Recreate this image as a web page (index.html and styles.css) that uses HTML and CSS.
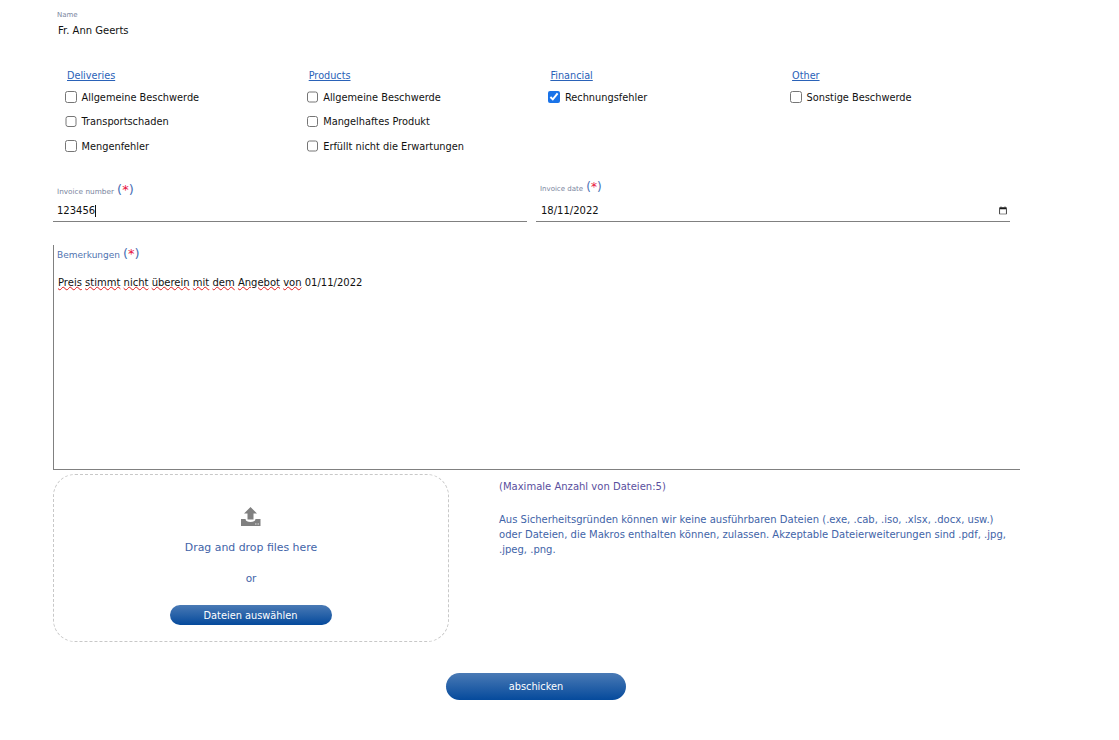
FILE: index.html
```html
<!DOCTYPE html>
<html lang="de">
<head>
<meta charset="utf-8">
<title>Beschwerde</title>
<link rel="stylesheet" href="styles.css">
</head>
<body>
<form class="page">
  <div class="name-block">
    <div class="tiny-label">Name</div>
    <div class="name-value">Fr. Ann Geerts</div>
  </div>

  <div class="categories">
    <div class="category">
      <a class="cat-title">Deliveries</a>
      <label class="check"><input type="checkbox"><span>Allgemeine Beschwerde</span></label>
      <label class="check"><input type="checkbox"><span>Transportschaden</span></label>
      <label class="check"><input type="checkbox"><span>Mengenfehler</span></label>
    </div>
    <div class="category">
      <a class="cat-title">Products</a>
      <label class="check"><input type="checkbox"><span>Allgemeine Beschwerde</span></label>
      <label class="check"><input type="checkbox"><span>Mangelhaftes Produkt</span></label>
      <label class="check"><input type="checkbox"><span>Erfüllt nicht die Erwartungen</span></label>
    </div>
    <div class="category">
      <a class="cat-title">Financial</a>
      <label class="check"><input type="checkbox" checked><span>Rechnungsfehler</span></label>
    </div>
    <div class="category">
      <a class="cat-title">Other</a>
      <label class="check"><input type="checkbox"><span>Sonstige Beschwerde</span></label>
    </div>
  </div>

  <div class="invoice-row">
    <div class="field">
      <div class="field-label"><span class="tiny-label label-number">Invoice number</span> <span class="req">(<b>*</b>)</span></div>
      <div class="field-value"><span class="caret-text">123456</span></div>
    </div>
    <div class="field field-date">
      <div class="field-label"><span class="tiny-label">Invoice date</span> <span class="req req-date">(<b>*</b>)</span></div>
      <div class="field-value date-value">
        <span>18/11/2022</span>
        <svg class="cal" width="8" height="9" viewBox="0 0 10 11"><path d="M1 1.500h8a.7.7 0 0 1 .7.7v7.300a.7.7 0 0 1-.7.7H1a.7.7 0 0 1-.7-.7V2.200a.7.7 0 0 1 .7-.7zM1.300 4v5.500h7.400V4z" fill="#1a1a1a" fill-rule="evenodd"/><path d="M2 .5h1v1H2zM7 .5h1v1H7z" fill="#1a1a1a"/></svg>
      </div>
    </div>
  </div>

  <div class="remarks">
    <div class="remarks-label">Bemerkungen <span class="req">(<b>*</b>)</span></div>
    <div class="remarks-text"><i>Preis</i> <i>stimmt</i> <i>nicht</i> <i>überein</i> <i>mit</i> <i>dem</i> <i>Angebot</i> <i>von</i> 01/11/2022</div>
  </div>

  <div class="upload-row">
    <div class="dropzone">
      <svg class="upload-icon" width="20" height="20" viewBox="0 0 20 20"><path d="M9.500 0 16 6.500h-3.500v6h-6v-6H3z" fill="#808080"/><path d="M0 12h4.500c.3 2.200 2 3 5 3s4.700-.8 5-3H19.500v7H0z" fill="#808080"/><path d="M14 16.500h1.500v1H14zM16.500 16.500H18v1h-1.500z" fill="#ddd"/></svg>
      <div class="drop-text">Drag and drop files here</div>
      <div class="drop-or">or</div>
      <button type="button" class="btn btn-small">Dateien auswählen</button>
    </div>
    <div class="upload-info">
      <p class="max-files">(Maximale Anzahl von Dateien:5)</p>
      <p>Aus Sicherheitsgründen können wir keine ausführbaren Dateien (.exe, .cab, .iso, .xlsx, .docx, usw.) oder Dateien, die Makros enthalten können, zulassen. Akzeptable Dateierweiterungen sind .pdf, .jpg, .jpeg, .png.</p>
    </div>
  </div>

  <div class="submit-row">
    <button type="button" class="btn btn-submit">abschicken</button>
  </div>
</form>
</body>
</html>
```
FILE: styles.css
```css
* { box-sizing: border-box; }
html, body { margin: 0; padding: 0; background: #fff; }
body {
  font-family: "DejaVu Sans", Verdana, sans-serif;
  font-size: 10px;
  color: #111;
  height: 740px;
  overflow: hidden;
}
.page { width: 1020px; padding: 11px 0 0 53px; }

.tiny-label { font-size: 7px; color: #7a86a0; line-height: 9px; }
.label-number { font-size: 7.300px; }
.name-block { padding-left: 4px; height: 42px; }
.name-value { margin-top: 5px; margin-left: 1px; line-height: 12px; }

.categories { display: grid; grid-template-columns: repeat(4, 241.700px); padding-left: 12px; height: 127px; padding-top: 16px; }
.category { display: flex; flex-direction: column; align-items: flex-start; }
.cat-title { color: #2a62b8; font-size: 9.700px; text-decoration: underline; margin-left: 2px; line-height: 14px; height: 14px; margin-bottom: 7px; }
.check { display: flex; align-items: center; height: 14px; margin-bottom: 10.500px; color: #111; font-size: 9.800px; }
.check input { width: 11.500px; height: 11.500px; margin: 0 5px 0 0; accent-color: #1a73e8; }

.invoice-row { display: flex; gap: 9px; width: 957px; }
.field { width: 474px; }
.field-label { height: 18px; line-height: 14px; padding-left: 4px; padding-top: 3px; }
.field-date .field-label { padding-top: 0; }
.req { color: #4a6fb5; font-size: 13px; }
.req-date { font-size: 12px; }
.req b { color: #e8103c; font-weight: 400; }
.field-value { height: 24px; border-bottom: 1px solid #808080; padding: 6px 0 0 4px; line-height: 13px; color: #111; }
.caret-text { border-right: 1px solid #111; display: inline-block; line-height: 12px; }
.date-value { display: flex; justify-content: space-between; padding-left: 5px; padding-right: 3px; }
.cal { margin-top: 2px; }

.remarks {
  margin-top: 23px;
  height: 225px;
  border-left: 1px solid #808080;
  border-bottom: 1px solid #808080;
  padding: 2px 0 0 3px;
}
.remarks-label { color: #5073b0; font-size: 9px; line-height: 14px; }
.remarks-label .req { font-size: 13px; }
.remarks-text { margin-top: 14px; margin-left: 1px; line-height: 13px; color: #111; }
.remarks-text i { font-style: normal; text-decoration: underline wavy #e01b1b 1px; text-underline-offset: 0; }

.upload-row { display: flex; margin-top: 4px; }
.dropzone {
  width: 396px;
  height: 168px;
  border: 1px dashed #c8c8c8;
  border-radius: 22px;
  display: flex;
  flex-direction: column;
  align-items: center;
  padding-top: 32px;
}
.upload-icon { margin-left: -1px; }
.drop-text { margin-top: 14px; color: #3f64a8; font-size: 10.900px; line-height: 14px; }
.drop-or { margin-top: 16px; color: #3f64a8; font-size: 10.500px; line-height: 14px; }
.btn {
  border: 0;
  color: #fff;
  font-family: inherit;
  font-weight: 400;
  background: linear-gradient(#4a7ab5, #054a9c);
  padding: 0;
  display: block;
}
.btn-small { width: 162px; height: 20px; border-radius: 10px; margin-top: 20px; margin-left: -1px; font-size: 9.800px; }
.upload-info { margin-left: 50px; width: 520px; color: #3f64a8; line-height: 15px; padding-top: 5px; font-size: 10.030px; }
.upload-info p { margin: 0; }
.upload-info .max-files { color: #5a4f9e; margin-bottom: 18px; }

.submit-row { width: 967px; display: flex; justify-content: center; margin-top: 31px; }
.btn-submit { width: 180px; height: 27px; border-radius: 13.500px; font-size: 9.800px; margin-left: -1px; }
```
